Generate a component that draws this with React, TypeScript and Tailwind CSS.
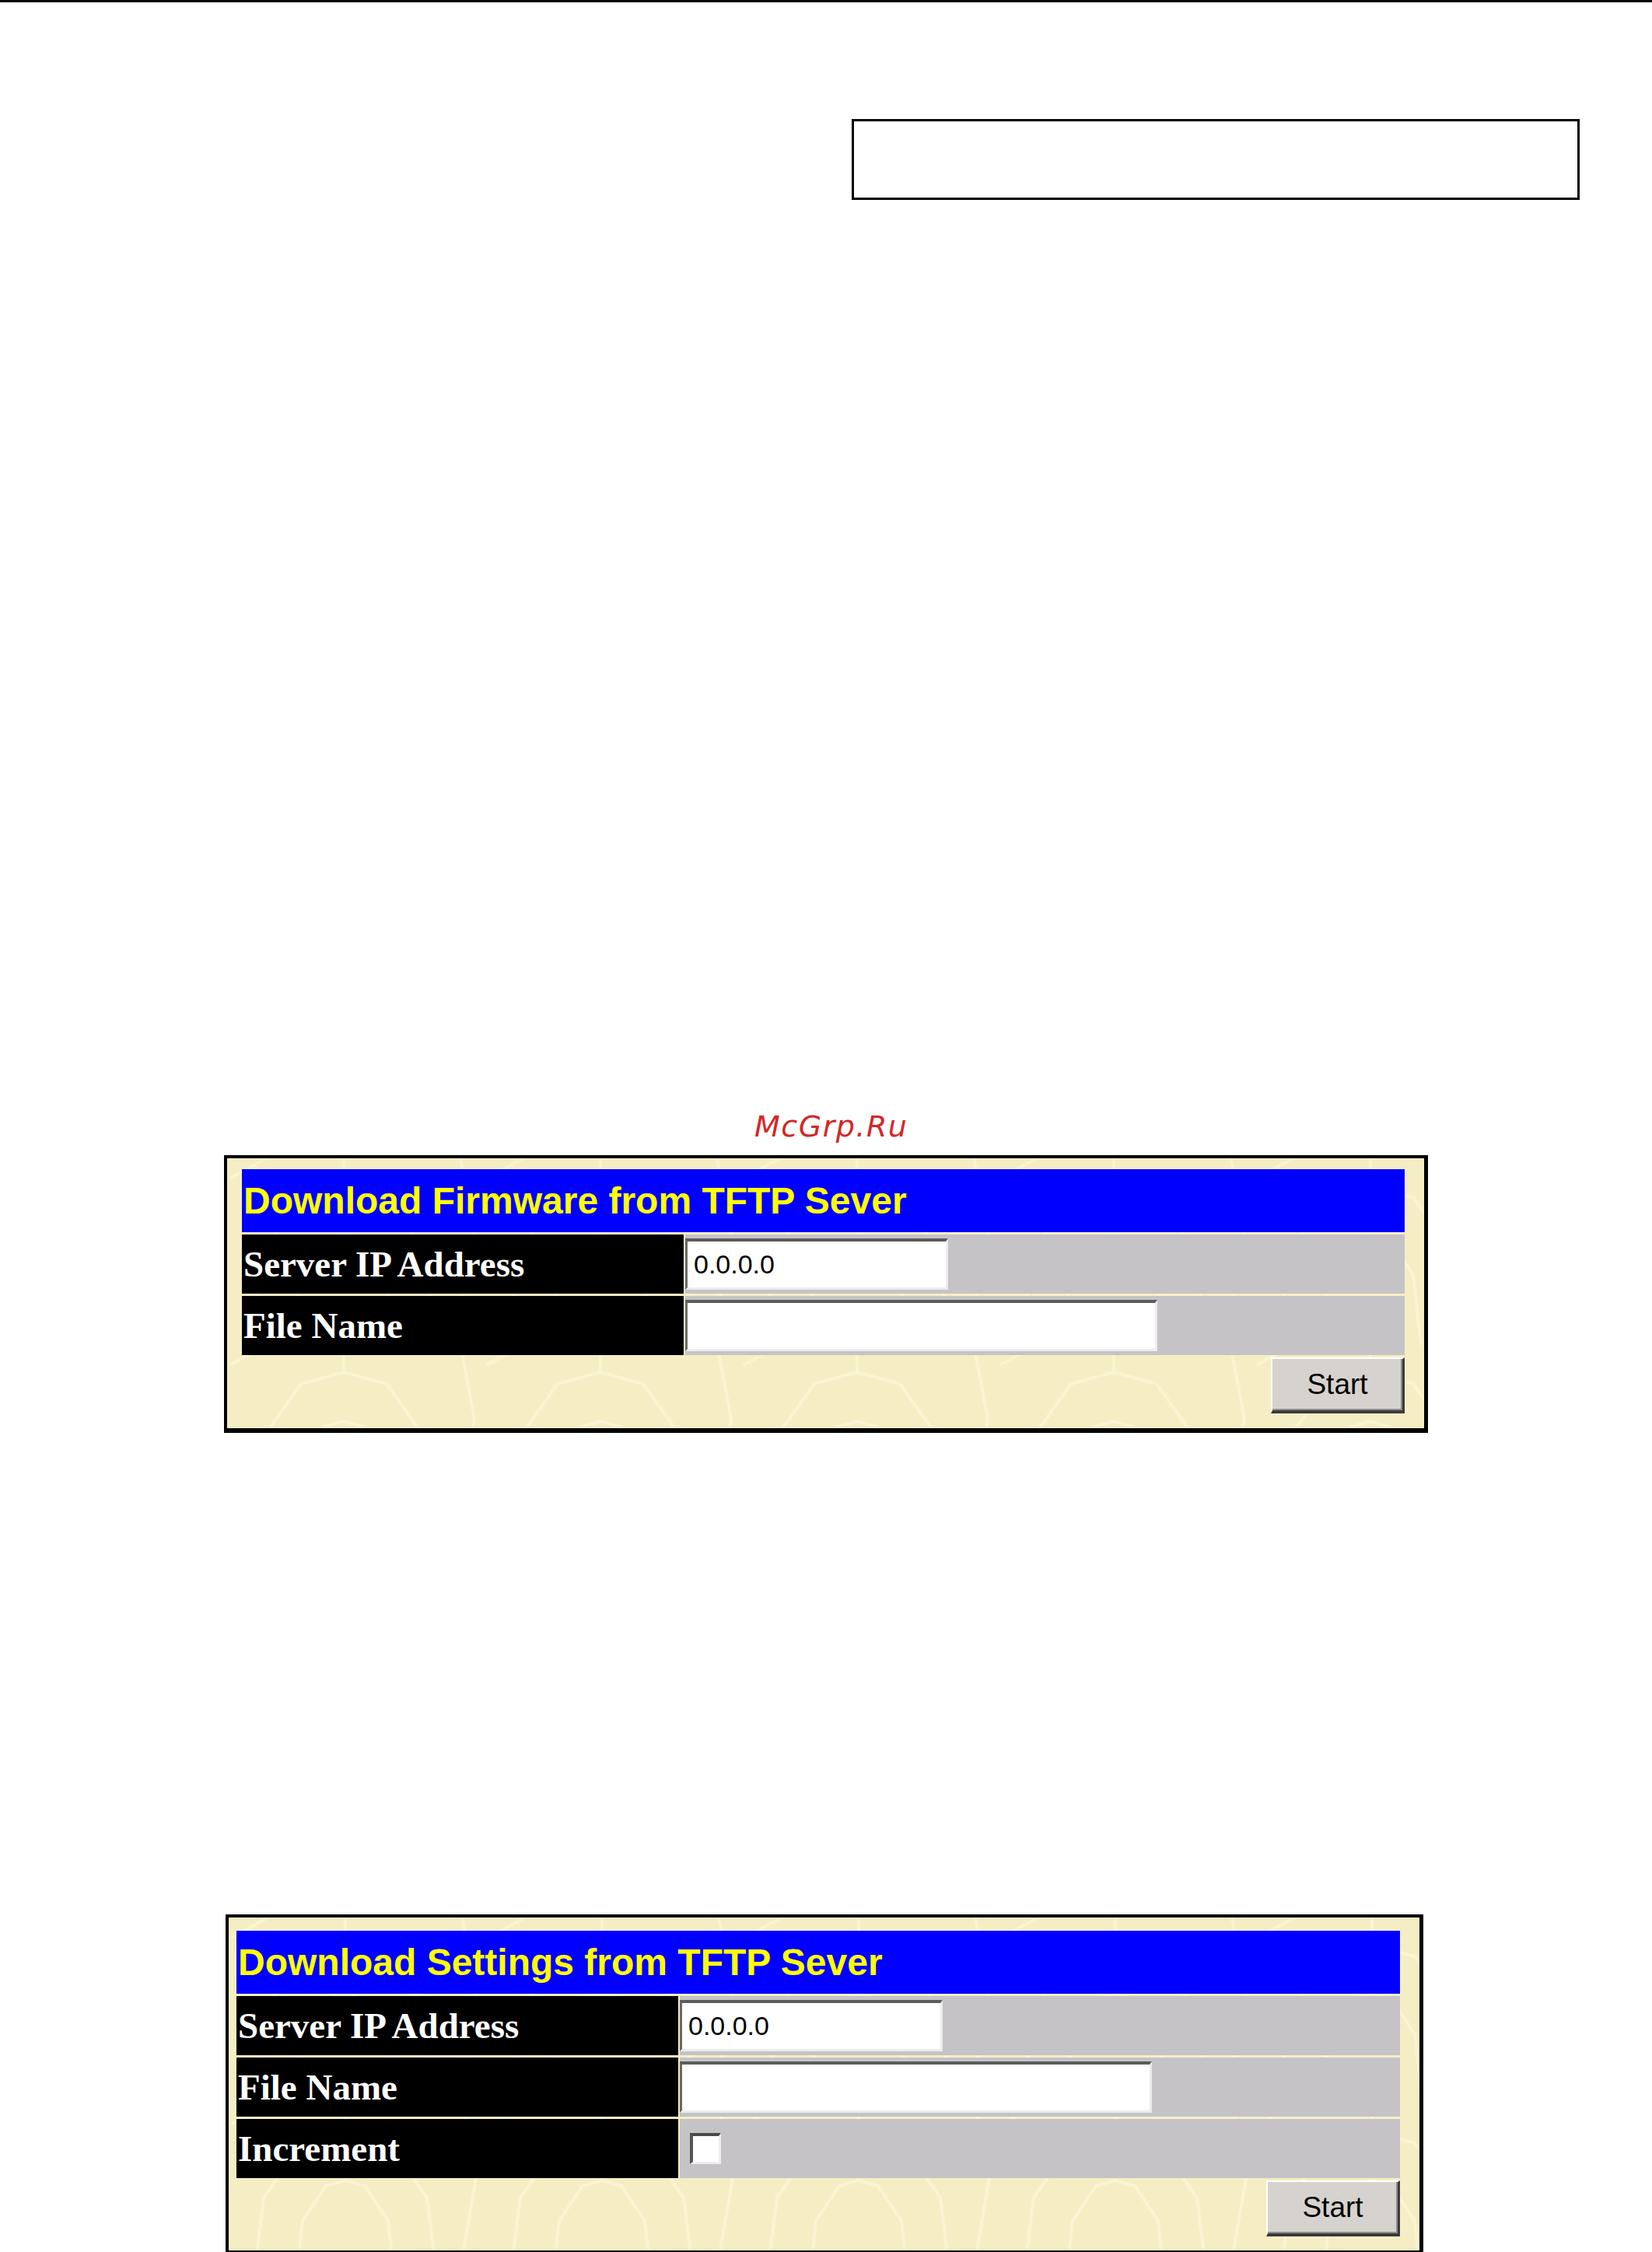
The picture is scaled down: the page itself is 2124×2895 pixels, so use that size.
import type { ReactNode } from 'react';

type RowKind = 'ip' | 'file' | 'check';

type Row = {
  label: string;
  kind: RowKind;
};

// faint cream motif behind each form, drawn once as a repeating tile
function Texture() {
  return (
    <svg className="absolute inset-0 h-full w-full" aria-hidden="true">
      <defs>
        <pattern id="dlinkTile" width="330" height="240" patternUnits="userSpaceOnUse">
          <g fill="none" stroke="#fcf8dc" strokeWidth="4" strokeLinecap="round" opacity="0.6">
            <path d="M30 240 L45 120 L95 50 L150 35 L205 50 L255 120 L270 240" />
            <path d="M85 240 L95 150 L125 105 L150 98 L175 105 L205 150 L215 240" />
            <path d="M150 35 L150 -5" />
            <path d="M300 0 L318 95 L300 200" />
            <path d="M5 25 L60 -5" />
          </g>
        </pattern>
      </defs>
      <rect width="100%" height="100%" fill="url(#dlinkTile)" />
    </svg>
  );
}

function TextBox({ width, value }: { width: string; value?: string }) {
  return (
    <input
      type="text"
      readOnly
      defaultValue={value ?? ''}
      className={`${width} h-[66px] bg-white border-t-[4px] border-l-[3px] border-b-[3px] border-r-[3px] border-t-[#5c5c5c] border-l-[#6a6a6a] border-b-[#ececec] border-r-[#ececec] pl-[8px] text-[34px] text-black font-['Liberation_Sans',Arial,sans-serif] outline-none`}
    />
  );
}

function Field({ kind }: { kind: RowKind }) {
  if (kind === 'ip') return <TextBox width="w-[338px]" value="0.0.0.0" />;
  if (kind === 'file') return <TextBox width="w-[607px]" />;
  return (
    <input
      type="checkbox"
      className="ml-[13px] h-[40px] w-[40px] appearance-none bg-white border-t-[4px] border-l-[4px] border-b-[3px] border-r-[3px] border-t-[#4a4a4a] border-l-[#555555] border-b-[#eeeeee] border-r-[#eeeeee]"
    />
  );
}

function Panel({
  title,
  rows,
  outer,
}: {
  title: string;
  rows: Row[];
  outer: string;
}) {
  return (
    <div className={`relative bg-[#f5eec4] border-black border-t-[4px] border-l-[4px] border-r-[5px] ${outer}`}>
      <Texture />
      <div className="relative flex flex-col gap-[3px]">
        <div className="flex h-[81px] items-center bg-[#0000ff] pl-[2px]">
          <span className="font-['Liberation_Sans',Arial,sans-serif] text-[48px] font-bold leading-none text-[#ffff00]">
            {title}
          </span>
        </div>
        {rows.map((row) => (
          <div key={row.label} className="flex h-[76px] gap-[2px]">
            <div className="flex w-[568px] shrink-0 items-center bg-black pl-[2px]">
              <span className="font-['Liberation_Serif','Times_New_Roman',serif] text-[47px] font-bold leading-none text-white">
                {row.label}
              </span>
            </div>
            <div className="flex flex-1 items-center bg-[#c5c3c6]">
              <Field kind={row.kind} />
            </div>
          </div>
        ))}
        <div className="flex h-[72px] justify-end">
          <StartButton>Start</StartButton>
        </div>
      </div>
    </div>
  );
}

function StartButton({ children }: { children: ReactNode }) {
  return (
    <button
      type="button"
      className="flex w-[172px] items-center justify-center bg-[#d6d3ce] border-t-2 border-l-2 border-t-white border-l-white border-r-[3px] border-b-[4px] border-r-[#3a3a3a] border-b-[#3a3a3a] shadow-[inset_-2px_-2px_0_#8c8c8c] font-['Liberation_Sans',Arial,sans-serif] text-[37px] text-black"
    >
      {children}
    </button>
  );
}

export default function App() {
  return (
    <div className="relative h-[2895px] w-[2124px] overflow-hidden bg-white">
      {/* page rule */}
      <div className="h-[3px] bg-black" />

      {/* empty caption frame */}
      <div className="ml-[1095px] mt-[150px] h-[104px] w-[936px] border-[3px] border-black" />

      <div className="ml-[970px] mt-[1169px] h-[44px] font-['DejaVu_Sans',Verdana,sans-serif] text-[38px] italic leading-[44px] tracking-[1.5px] text-[#d42626]">
        McGrp.Ru
      </div>

      <div className="mt-[15px] ml-[288px] w-[1548px]">
        <Panel
          title="Download Firmware from TFTP Sever"
          outer="border-b-[6px] pl-[19px] pt-[14px] pr-[25px] pb-[19px]"
          rows={[
            { label: 'Server IP Address', kind: 'ip' },
            { label: 'File Name', kind: 'file' },
          ]}
        />
      </div>

      <div className="mt-[619px] ml-[290px] w-[1540px]">
        <Panel
          title="Download Settings from TFTP Sever"
          outer="border-b-[5px] pl-[10px] pt-[17px] pr-[25px] pb-[18px]"
          rows={[
            { label: 'Server IP Address', kind: 'ip' },
            { label: 'File Name', kind: 'file' },
            { label: 'Increment', kind: 'check' },
          ]}
        />
      </div>
    </div>
  );
}
